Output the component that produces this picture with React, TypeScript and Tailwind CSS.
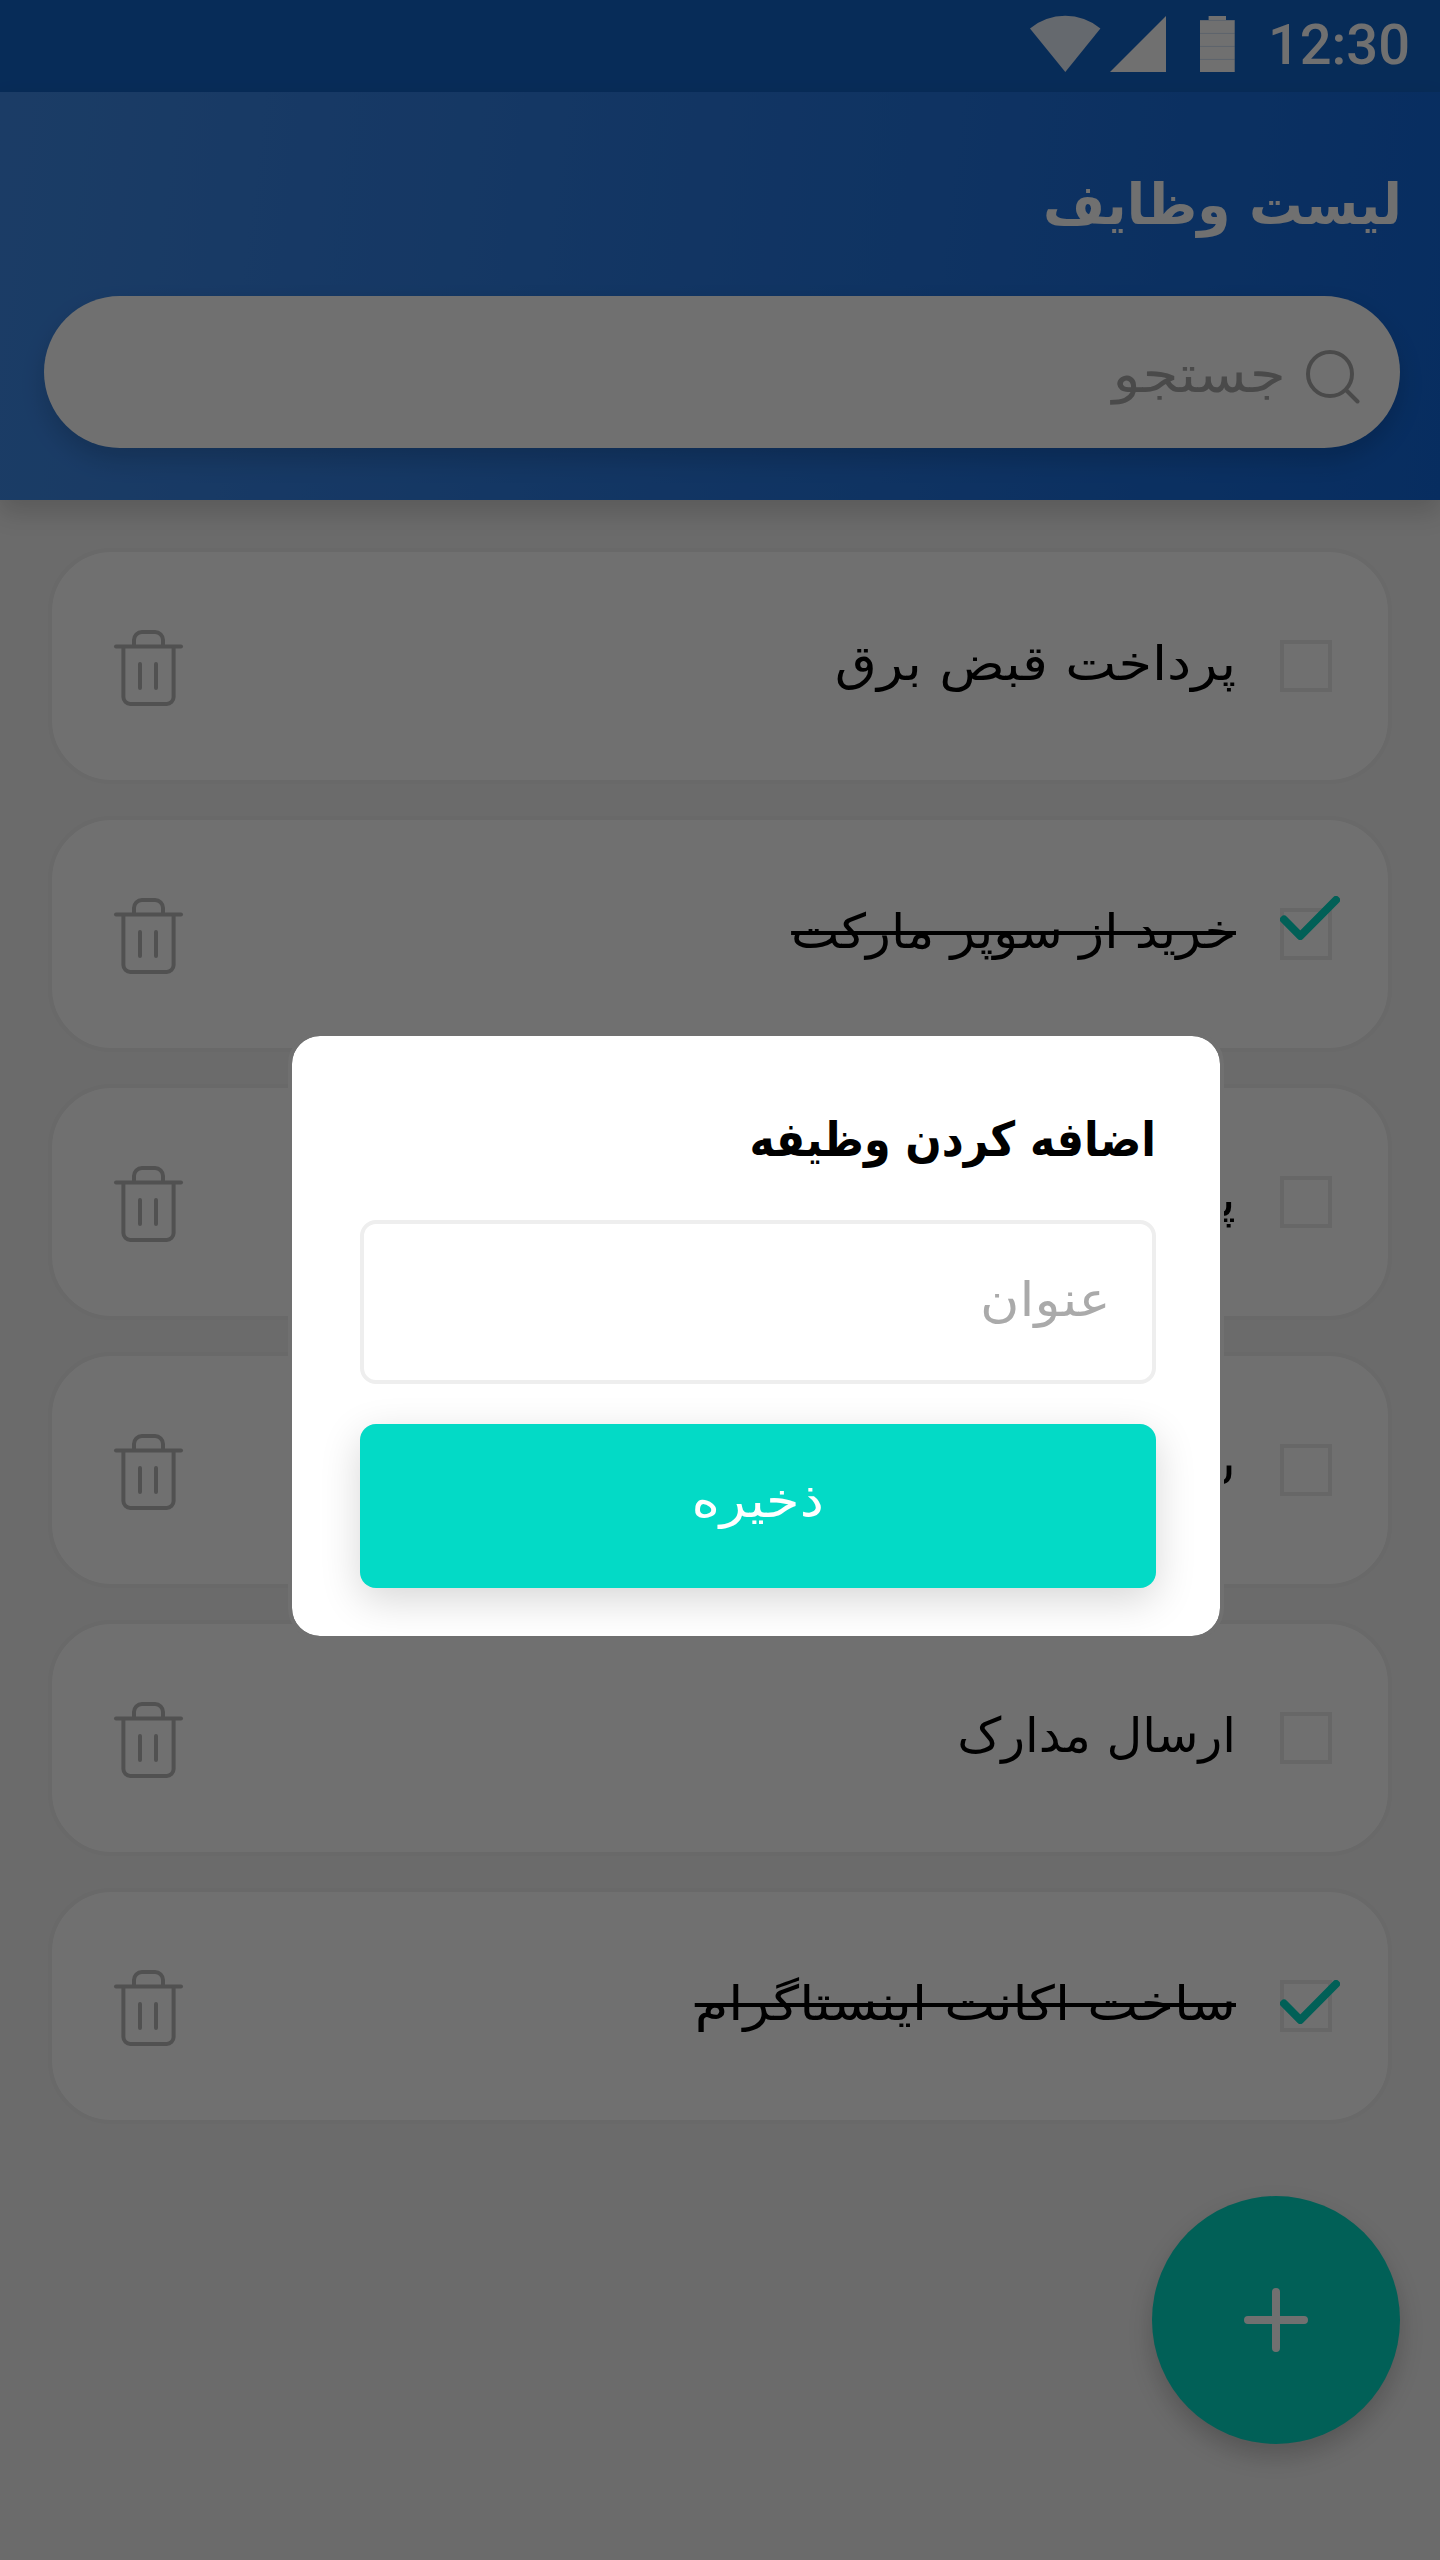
type Task = {
  title: string
  scale: string
  checkTop?: string
}

const tasks: Task[] = [
  { title: 'پرداخت قبض برق', scale: 'scale-x-[1.13]' },
  { title: 'خرید از سوپر مارکت', scale: 'scale-x-[1.072]', checkTop: '-top-4' },
  { title: 'پرداخت قبض گاز', scale: 'scale-x-[1.13]' },
  { title: 'سفارش غذا', scale: 'scale-x-[1.1]' },
  { title: 'ارسال مدارک', scale: 'scale-x-[1.025]' },
  { title: 'ساخت اکانت اینستاگرام', scale: 'scale-x-[1.13]', checkTop: '-top-1' },
]

function StatusBar() {
  return (
    <div dir="ltr" className="flex h-[92px] items-center justify-end bg-[#1264c9] pr-[30px] pb-1 text-white">
      <svg className="mr-1 h-16 w-[76px]" viewBox="0 0 76 64" fill="currentColor" fillOpacity="0.9">
        <path d="M2 16.5A55.3 55.3 0 0 1 72.4 16.5L37.3 60Z" />
      </svg>
      <svg className="mr-8 h-16 w-[60px]" viewBox="0 0 60 64" fill="currentColor">
        <path d="M2 60L58 4V60Z" />
      </svg>
      <svg className="mr-8 h-16 w-9" viewBox="0 0 36 64">
        <path d="M8.6 4H26V8H34.7V60H0V8H8.6Z" fill="currentColor" />
        <path d="M0 8.4H34.7M0 21.4H34.7M0 34.4H34.7M0 47.4H34.7" stroke="#1264c9" strokeOpacity="0.2" />
      </svg>
      <span className="mt-[2px] font-['Roboto',sans-serif] text-[56px] leading-[64px] font-medium">12:30</span>
    </div>
  )
}

function Header() {
  return (
    <header className="relative z-10 h-[408px] bg-linear-[97deg] from-[#3f8ae8] to-[#1268db] pt-[81px] pr-10 pl-11 shadow-[0_12px_24px_rgba(0,0,0,0.16)]">
      <h1 className="-mr-[2px] flex h-16 text-[56px] leading-[64px] font-bold text-white">
        <span className="origin-right scale-x-[0.955]">لیست وظایف</span>
      </h1>
      <div className="mt-[59px] flex h-[152px] items-center gap-[14px] rounded-full bg-white pr-9 text-[#a9a9a9] shadow-[0_12px_24px_rgba(0,0,0,0.16)]">
        <svg className="size-16" viewBox="0 0 64 64" fill="none" stroke="currentColor" strokeWidth="4" strokeLinecap="round">
          <circle cx="30" cy="34" r="22" />
          <path d="M46.5 50.5L57.5 61.5" />
        </svg>
        <span className="mt-[3px] origin-right scale-x-[1.12] text-[52px] leading-[58px]">جستجو</span>
      </div>
    </header>
  )
}

function TrashIcon() {
  return (
    <svg
      className="h-20 w-[72px] text-[#b8b8b8]"
      viewBox="0 0 72 80"
      fill="none"
      stroke="currentColor"
      strokeWidth="4"
      strokeLinecap="round"
    >
      <path d="M4 20.4H69" />
      <path d="M22 20V14a8 8 0 0 1 8-8H43a8 8 0 0 1 8 8V20" strokeLinecap="butt" />
      <path d="M11.4 20.4V71a7 7 0 0 0 7 7H54.6a7 7 0 0 0 7-7V20.4" strokeLinecap="butt" />
      <path d="M28 38V62M44 38V62" />
    </svg>
  )
}

function TaskRow({ task }: { task: Task }) {
  return (
    <li className="flex h-[236px] items-center rounded-[64px] border-4 border-[#eeeeee] bg-white pr-14 pl-[60px]">
      <div className="relative size-[52px] border-4 border-[#ebebeb]">
        {task.checkTop && (
          <svg
            className={`absolute -left-1 h-11 w-[60px] ${task.checkTop}`}
            viewBox="0 0 60 44"
            fill="none"
            stroke="#03dac6"
            strokeWidth="8"
            strokeLinecap="round"
            strokeLinejoin="round"
          >
            <path d="M4 23.5L20.3 40L56 4" />
          </svg>
        )}
      </div>
      <span className={`relative mr-11 mb-[6px] origin-right text-[48px] leading-[56px] text-black ${task.scale}`}>
        {task.title}
        {task.checkTop && <i className="absolute inset-x-0 top-7 h-1 bg-black" />}
      </span>
      <span className="grow" />
      <TrashIcon />
    </li>
  )
}

function AddTaskDialog() {
  return (
    <section className="absolute top-[1032px] left-[288px] z-30 flex h-[608px] w-[936px] flex-col rounded-[32px] border-4 border-[#707070] bg-white bg-clip-padding pt-[75px] pr-16 pl-[68px]">
      <h2 className="h-14 origin-right scale-x-[0.99] font-['DejaVu_Sans_Condensed','DejaVu_Sans',sans-serif] text-[48px] leading-[56px] font-bold text-black">
        اضافه کردن وظیفه
      </h2>
      <div className="mt-[53px] flex h-[164px] items-center rounded-2xl border-4 border-[#eeeeee] pr-[41px] pb-[6px] text-[48px] leading-[56px] text-[#aaaaaa]">
        <span className="origin-right scale-x-[1.12]">عنوان</span>
      </div>
      <button className="mt-10 flex h-[164px] items-center justify-center rounded-2xl bg-[#03dac6] pb-[13px] text-[48px] leading-[56px] text-white shadow-[0_12px_40px_rgba(0,0,0,0.16)]">
        <span className="scale-x-[1.13]">ذخیره</span>
      </button>
    </section>
  )
}

export default function App() {
  return (
    <main
      dir="rtl"
      className="relative h-[2560px] w-[1440px] overflow-hidden bg-[#f3f3f3] font-['DejaVu_Sans',sans-serif]"
    >
      <StatusBar />
      <Header />
      <ul className="mt-12 flex flex-col gap-8 px-12">
        {tasks.map((task) => (
          <TaskRow key={task.title} task={task} />
        ))}
      </ul>
      <button className="absolute top-[2196px] left-[1152px] flex size-[248px] items-center justify-center rounded-full bg-[#03dac6] shadow-[0_12px_24px_rgba(0,0,0,0.2)]">
        <svg className="size-16" viewBox="0 0 64 64" stroke="white" strokeWidth="8" strokeLinecap="round">
          <path d="M4 32H60M32 4V60" />
        </svg>
      </button>
      <div className="absolute inset-0 z-20 bg-black/56" />
      <AddTaskDialog />
    </main>
  )
}
